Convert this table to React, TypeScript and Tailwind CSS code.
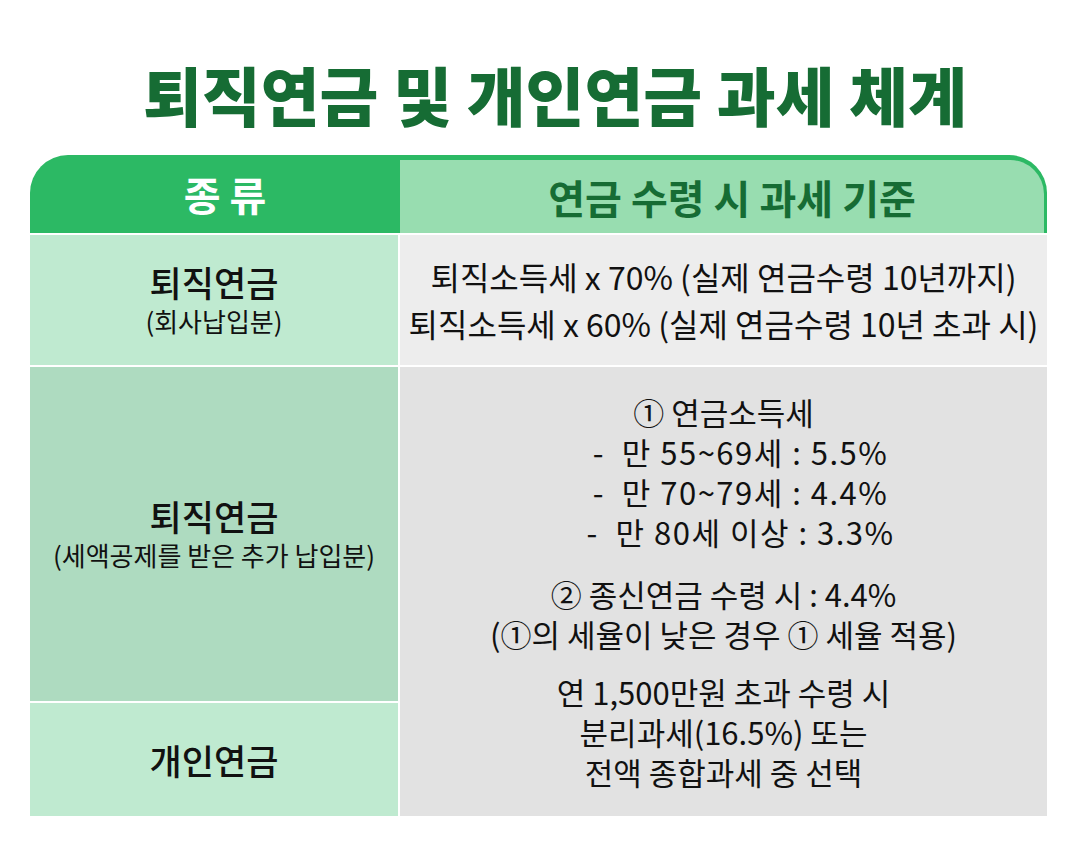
export default function App() {
  return (
    <div className="w-[1080px] h-[846px] bg-white font-['Noto_Sans_CJK_KR',sans-serif] text-[#111]">
      <h1 className="pt-[62px] pl-[30px] text-center text-[64px] leading-[63px] font-black text-[#166c34]">
        퇴직연금 및 개인연금 과세 체계
      </h1>

      <div className="mx-[30px] mt-[30px] w-[1017px]">
        {/* header */}
        <div className="flex h-[78px] rounded-t-[38px] bg-[#2cb964] pr-[3px]">
          <div className="flex w-[370px] items-center justify-center pl-5 text-[40px] font-bold text-white">
            종 류
          </div>
          <div className="mt-[5px] flex flex-1 items-center justify-center rounded-tr-[34px] bg-[#98ddb0] pl-5 text-[40px] font-bold text-[#166c34]">
            연금 수령 시 과세 기준
          </div>
        </div>

        {/* body */}
        <div className="mt-[2px] grid grid-cols-[368px_1fr] grid-rows-[130px_334px_113px] gap-[2px]">
          <div className="flex flex-col items-center justify-center bg-[#bfead0]">
            <div className="text-[35px] leading-[42px] font-medium">퇴직연금</div>
            <div className="text-[26px] leading-[36px]">(회사납입분)</div>
          </div>
          <div className="flex flex-col items-center justify-center bg-[#ededed] text-[32px] leading-[47px]">
            <div>퇴직소득세 x 70% (실제 연금수령 10년까지)</div>
            <div>퇴직소득세 x 60% (실제 연금수령 10년 초과 시)</div>
          </div>

          <div className="flex flex-col items-center justify-center bg-[#aedbc0]">
            <div className="text-[35px] leading-[42px] font-medium">퇴직연금</div>
            <div className="text-[26px] leading-[36px]">(세액공제를 받은 추가 납입분)</div>
          </div>
          <div className="row-span-2 flex flex-col items-center justify-center bg-[#e2e2e2] text-center text-[31px] leading-[40px]">
            <div>① 연금소득세</div>
            <div className="pl-[34px] tracking-[1.5px]">-&nbsp; 만 55~69세 : 5.5%</div>
            <div className="pl-[34px] tracking-[1.5px]">-&nbsp; 만 70~79세 : 4.4%</div>
            <div className="pl-[34px] tracking-[1.5px]">-&nbsp; 만 80세 이상 : 3.3%</div>
            <div className="mt-[22px]">② 종신연금 수령 시 : 4.4%</div>
            <div>(①의 세율이 낮은 경우 ① 세율 적용)</div>
            <div className="mt-[18px]">연 1,500만원 초과 수령 시</div>
            <div>분리과세(16.5%) 또는</div>
            <div>전액 종합과세 중 선택</div>
          </div>

          <div className="flex items-center justify-center bg-[#bfead0]">
            <div className="text-[35px] leading-[42px] font-medium">개인연금</div>
          </div>
        </div>
      </div>
    </div>
  )
}
